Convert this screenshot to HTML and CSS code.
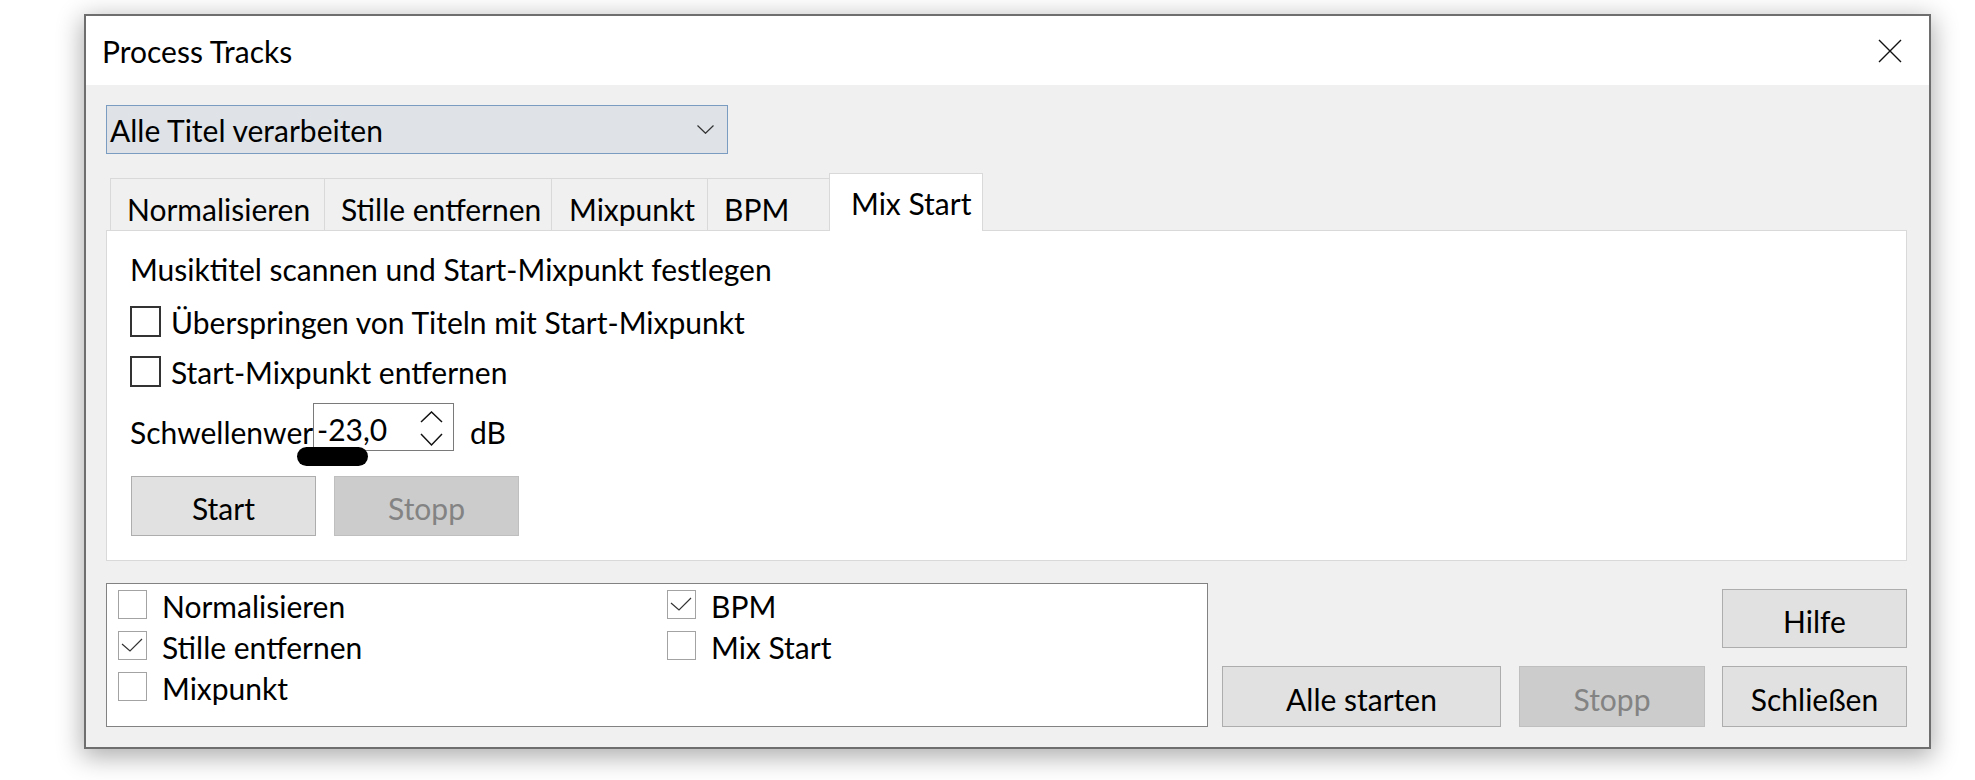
FILE: index.html
```html
<!DOCTYPE html>
<html lang="de">
<head>
    <meta charset="UTF-8">
    <meta name="viewport" content="width=device-width, initial-scale=1.0">
    <title>Process Tracks</title>
    <link rel="stylesheet" href="styles.css">
</head>
<body>

<div class="dialog">
    <!-- Titelleiste -->
    <div class="titlebar">
        <span class="title">Process Tracks</span>
        <svg class="close" width="24" height="24" viewBox="0 0 24 24">
            <path d="M1 1 L23 23 M23 1 L1 23" stroke="#111" stroke-width="1.4" fill="none"/>
        </svg>
    </div>

    <div class="dialog-body">
        <div class="combo">
            <span>Alle Titel verarbeiten</span>
            <svg width="17" height="9" viewBox="0 0 17 9">
                <polyline points="0.5,0.5 8.5,8.3 16.5,0.5" stroke="#333" stroke-width="1.2" fill="none"/>
            </svg>
        </div>

        <div class="tabs">
            <div class="tab tab-1">Normalisieren</div>
            <div class="tab tab-2">Stille entfernen</div>
            <div class="tab tab-3">Mixpunkt</div>
            <div class="tab tab-4">BPM</div>
            <div class="tab tab-5 active">Mix Start</div>
        </div>

        <div class="pane">
            <div class="pane-title">Musiktitel scannen und Start-Mixpunkt festlegen</div>
            <div class="check-row first">
                <span class="box"></span>
                <span>Überspringen von Titeln mit Start-Mixpunkt</span>
            </div>
            <div class="check-row">
                <span class="box"></span>
                <span>Start-Mixpunkt entfernen</span>
            </div>
            <div class="spin-row">
                <span class="spin-label">Schwellenwert</span>
                <div class="spin">
                    <span class="spin-value">-23,0</span>
                    <svg width="23" height="36" viewBox="0 0 23 36">
                        <polyline points="1,11 11.5,1 22,11" stroke="#111" stroke-width="1.5" fill="none"/>
                        <polyline points="1,23 11.5,34 22,23" stroke="#111" stroke-width="1.5" fill="none"/>
                    </svg>
                </div>
                <span class="unit">dB</span>
                <span class="pill"></span>
            </div>
            <div class="pane-buttons">
                <button class="btn start">Start</button>
                <button class="btn disabled">Stopp</button>
            </div>
        </div>

        <div class="bottom">
            <div class="listbox">
                <div class="item"><span class="lbox"></span><span>Normalisieren</span></div>
                <div class="item"><span class="lbox checked"><svg width="29" height="29" viewBox="0 0 29 29"><polyline points="4,13 12,20 24,8" stroke="#333" stroke-width="1.2" fill="none"/></svg></span><span>Stille entfernen</span></div>
                <div class="item"><span class="lbox"></span><span>Mixpunkt</span></div>
                <div class="item"><span class="lbox checked"><svg width="29" height="29" viewBox="0 0 29 29"><polyline points="4,13 12,20 24,8" stroke="#333" stroke-width="1.2" fill="none"/></svg></span><span>BPM</span></div>
                <div class="item"><span class="lbox"></span><span>Mix Start</span></div>
            </div>

            <div class="actions">
                <button class="btn help">Hilfe</button>
                <div class="action-row">
                    <button class="btn run-all">Alle starten</button>
                    <button class="btn disabled stop-all">Stopp</button>
                    <button class="btn close-btn">Schließen</button>
                </div>
            </div>
        </div>
    </div>
</div>

</body>
</html>
```

FILE: styles.css
```css
html, body {
    height: 100%;
}
body {
    margin: 0;
    padding: 0;
    background-color: #ffffff;
    font-family: Lato, "Open Sans", sans-serif;
    font-size: 30px;
    color: #000;
    min-height: 780px;
    box-sizing: border-box;
    padding-top: 14px;
}

.dialog {
    margin: 0 0 0 84px;
    width: 1847px;
    height: 735px;
    box-sizing: border-box;
    border: 2px solid #6e6e6e;
    box-shadow: 0 6px 24px 2px rgba(0, 0, 0, 0.32);
    display: flex;
    flex-direction: column;
    background-color: #f0f0f0;
}

/* Titelleiste */
.titlebar {
    height: 69px;
    flex-shrink: 0;
    background-color: #fff;
    display: flex;
    align-items: center;
    justify-content: space-between;
    padding: 0 27px 0 16px;
}
.titlebar .close {
    display: block;
}

.dialog-body {
    flex: 1;
    display: flex;
    flex-direction: column;
    padding: 20px 22px 20px 20px;
}

.combo {
    width: 622px;
    height: 49px;
    box-sizing: border-box;
    border: 1px solid #7a9cc0;
    background-color: #dfe3e8;
    display: flex;
    align-items: center;
    justify-content: space-between;
    padding: 0 13px 0 3px;
}
.combo svg {
    display: block;
}

/* Reiter */
.tabs {
    margin-top: 19px;
    height: 57px;
    display: flex;
    align-items: flex-end;
    padding-left: 4px;
}
.tab {
    height: 52px;
    box-sizing: border-box;
    border: 1px solid #d9d9d9;
    border-bottom: none;
    margin-right: -1px;
    display: flex;
    align-items: center;
    padding: 8px 0 0 16px;
    white-space: nowrap;
    background-color: #f0f0f0;
}
.tab-1 { width: 215px; }
.tab-2 { width: 228px; padding-left: 16px; }
.tab-3 { width: 157px; padding-left: 17px; }
.tab-4 { width: 123px; }
.tab-5 { width: 154px; }
.tab.active {
    height: 58px;
    margin-bottom: -1px;
    padding: 0 0 0 21px;
    background-color: #fff;
    position: relative;
    z-index: 1;
}

.pane {
    height: 331px;
    box-sizing: border-box;
    border: 1px solid #d9d9d9;
    background-color: #fff;
    padding-left: 23px;
    display: flex;
    flex-direction: column;
}
.pane-title {
    margin-top: 19px;
    line-height: 38px;
}
.check-row {
    display: flex;
    align-items: center;
    height: 31px;
    margin-top: 19px;
    white-space: nowrap;
}
.check-row.first {
    margin-top: 18px;
}
.check-row .box {
    width: 31px;
    height: 31px;
    box-sizing: border-box;
    border: 2px solid #333;
    margin-right: 10px;
    flex-shrink: 0;
}

.spin-row {
    position: relative;
    display: flex;
    align-items: flex-start;
    height: 48px;
    margin-top: 16px;
}
.spin-label {
    width: 183px;
    overflow: hidden;
    white-space: nowrap;
    line-height: 38px;
    margin-top: 10px;
}
.spin {
    width: 141px;
    height: 48px;
    box-sizing: border-box;
    border: 1px solid #7a7a7a;
    background-color: #fff;
    display: flex;
    justify-content: space-between;
    padding: 6px 10px 0 3px;
}
.spin-value {
    line-height: 38px;
}
.spin svg {
    display: block;
    margin-top: 1px;
}
.unit {
    margin-left: 16px;
    line-height: 38px;
    margin-top: 10px;
}
.pill {
    position: absolute;
    left: 167px;
    top: 44px;
    width: 71px;
    height: 19px;
    border-radius: 10px;
    background-color: #000;
}

.pane-buttons {
    display: flex;
    gap: 18px;
    margin-top: 25px;
    margin-left: 1px;
}

/* Schaltflächen */
.btn {
    font-family: inherit;
    font-size: 30px;
    color: #000;
    background-color: #e1e1e1;
    border: 1px solid #adadad;
    border-radius: 0;
    height: 60px;
    width: 185px;
    padding: 4px 0 0 0;
    margin: 0;
    cursor: pointer;
}
.btn.disabled {
    background-color: #cccccc;
    border-color: #bfbfbf;
    color: #838383;
}

/* Untere Liste */
.bottom {
    margin-top: 22px;
    display: flex;
    align-items: flex-end;
    justify-content: space-between;
}
.listbox {
    width: 1102px;
    height: 144px;
    box-sizing: border-box;
    border: 1px solid #828282;
    background-color: #fff;
    padding-left: 11px;
    display: grid;
    grid-auto-flow: column;
    grid-template-rows: repeat(3, 41px);
    grid-template-columns: 549px 400px;
}
.item {
    display: flex;
    align-items: center;
    white-space: nowrap;
}
.item span:last-child {
    padding-top: 2px;
}
.lbox {
    width: 29px;
    height: 29px;
    box-sizing: border-box;
    border: 1px solid #a3a3a3;
    margin-right: 15px;
    flex-shrink: 0;
    position: relative;
}
.lbox svg {
    position: absolute;
    left: -1px;
    top: -1px;
}

.actions {
    display: flex;
    flex-direction: column;
    align-items: flex-end;
    gap: 18px;
}
.btn.help {
    width: 185px;
    height: 59px;
}
.action-row {
    display: flex;
    gap: 18px;
}
.action-row .btn {
    height: 61px;
}
.btn.run-all { width: 279px; }
.btn.stop-all { width: 186px; margin-right: -1px; }
.btn.close-btn { width: 185px; }
```
